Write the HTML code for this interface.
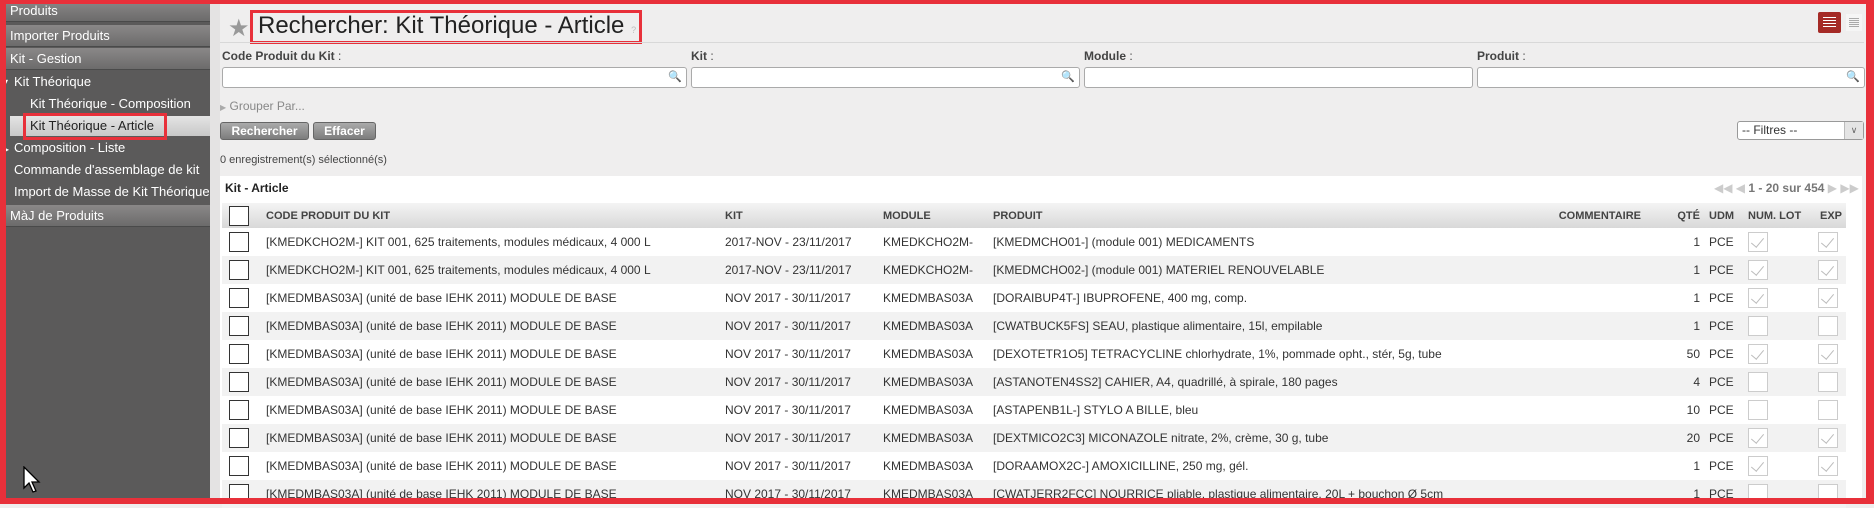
<!DOCTYPE html>
<html><head><meta charset="utf-8"><style>
*{box-sizing:border-box;margin:0;padding:0}
body{width:1874px;height:504px;overflow:hidden;background:#efeeee;font-family:"Liberation Sans",Arial,sans-serif;position:relative;color:#333}
.abs{position:absolute}
#side{left:0;top:0;width:210px;height:504px;background:#5b5a5a}
.bar{position:absolute;left:0;width:210px;height:22px;background:linear-gradient(#8a8888,#6c6b6b);border-bottom:1px solid #4a4a4a;color:#fff;font-size:13px;line-height:22px;padding-left:10px}
.it{position:absolute;color:#fff;font-size:13px;line-height:16px}
.lbl{position:absolute;top:49px;font-size:12px;font-weight:bold;color:#444}
.lbl span{font-weight:normal}
.inp{position:absolute;top:67px;height:21px;background:#fff;border:1px solid #aaa;border-radius:3px}
.btn{position:absolute;top:122px;height:18px;background:linear-gradient(#aaa,#7d7d7d);border:1px solid #666;border-radius:3px;color:#fff;font-weight:bold;font-size:12px;line-height:16px;text-align:center}
table{position:absolute;left:222px;top:203px;border-collapse:collapse;font-size:12px;table-layout:fixed;width:1624px}
td{height:28px;white-space:nowrap;padding:0;overflow:visible}
tr.h td{height:25px;background:linear-gradient(#f4f4f4,#d8d8d8);font-weight:bold;font-size:11px;color:#444}
tr:nth-child(odd):not(.h) td{background:#f2f2f2}
tr:nth-child(even) td{background:#fff}
.cb{display:inline-block;width:20px;height:20px;border:1px solid #333;background:#fff;vertical-align:middle}
.ck{display:inline-block;width:20px;height:20px;border:1px solid #ccc;background:#fff;vertical-align:middle;position:relative}
.ck.on::after{content:"";position:absolute;left:5px;top:2px;width:6px;height:11px;border-right:1.5px solid #bbb;border-bottom:1.5px solid #bbb;transform:rotate(40deg)}
.r{text-align:right}
</style></head><body>
<div id="side" class="abs">
<div class="bar" style="top:0">Produits</div>
<div class="bar" style="top:25px">Importer Produits</div>
<div class="bar" style="top:48px">Kit - Gestion</div>
<div class="it" style="left:4px;top:74px;font-size:8px">&#9662;</div>
<div class="it" style="left:14px;top:74px">Kit Théorique</div>
<div class="it" style="left:30px;top:96px">Kit Théorique - Composition</div>
<div class="abs" style="left:10px;top:116px;width:200px;height:20px;background:linear-gradient(#e4e4e4,#c8c8c8)"></div>
<div class="it" style="left:30px;top:118px;color:#222">Kit Théorique - Article</div>
<div class="abs" style="left:23px;top:113px;width:144px;height:27px;border:3px solid #e8303a"></div>
<div class="it" style="left:5px;top:142px;font-size:8px">&#9656;</div>
<div class="it" style="left:14px;top:140px">Composition - Liste</div>
<div class="it" style="left:14px;top:162px">Commande d'assemblage de kit</div>
<div class="it" style="left:14px;top:184px">Import de Masse de Kit Théorique</div>
<div class="bar" style="top:205px">MàJ de Produits</div>
</div>
<div class="abs" style="left:210px;top:0;width:10px;height:504px;background:#e4e3e3"></div>
<div class="abs" style="left:228px;top:14px;font-size:24px;color:#999">&#9733;</div>
<div class="abs" style="left:258px;top:12px;font-size:24px;color:#222">Rechercher: Kit Théorique - Article <span style="font-size:9px;color:#bbb">?</span></div>
<div class="abs" style="left:250px;top:10px;width:392px;height:34px;border:3px solid #e8303a"></div>
<div class="abs" style="left:220px;top:42px;width:1644px;height:1px;background:#d8d8d8"></div>
<div class="abs" style="left:1818px;top:12px;width:23px;height:21px;background:#a52a26;border-radius:2px"><div style="margin:5px 5px;height:11px;background:repeating-linear-gradient(#fff 0 1px,transparent 1px 3px)"></div></div>
<div class="abs" style="left:1846px;top:14px;width:16px;height:17px;background:#f5f5f5"><div style="margin:4px 3px;height:9px;background:repeating-linear-gradient(#aaa 0 1px,transparent 1px 2px)"></div></div>
<div class="lbl" style="left:222px">Code Produit du Kit <span>:</span></div>
<div class="lbl" style="left:691px">Kit <span>:</span></div>
<div class="lbl" style="left:1084px">Module <span>:</span></div>
<div class="lbl" style="left:1477px">Produit <span>:</span></div>
<div class="inp" style="left:222px;width:465px"><span style="position:absolute;right:4px;top:2px;font-size:11px;color:#777">&#128269;</span></div>
<div class="inp" style="left:691px;width:389px"><span style="position:absolute;right:4px;top:2px;font-size:11px;color:#777">&#128269;</span></div>
<div class="inp" style="left:1084px;width:389px"></div>
<div class="inp" style="left:1477px;width:388px"><span style="position:absolute;right:4px;top:2px;font-size:11px;color:#777">&#128269;</span></div>
<div class="abs" style="left:220px;top:99px;font-size:12px;color:#888"><span style="font-size:8px;color:#aaa">&#9654;</span> Grouper Par...</div>
<div class="btn" style="left:220px;width:89px">Rechercher</div>
<div class="btn" style="left:313px;width:63px">Effacer</div>
<div class="abs" style="left:1737px;top:121px;width:127px;height:19px;background:#fff;border:1px solid #999;border-radius:3px;font-size:12px;line-height:17px;padding-left:4px">-- Filtres --<span style="position:absolute;right:0;top:0;width:19px;height:17px;background:#e4e4e4;border-left:1px solid #bbb;text-align:center;font-size:9px;color:#666">&#8744;</span></div>
<div class="abs" style="left:220px;top:154px;font-size:11px;color:#444">0 enregistrement(s) sélectionné(s)</div>
<div class="abs" style="left:220px;top:176px;width:1642px;height:322px;background:#fff"></div>
<div class="abs" style="left:225px;top:181px;font-size:12px;font-weight:bold;color:#222">Kit - Article</div>
<div class="abs" style="left:1714px;top:181px;font-size:12px;color:#888"><span style="color:#ccc">&#9664;&#9664; &#9664;</span> <span style="font-weight:bold;color:#777">1 - 20 sur 454</span> <span style="color:#ccc">&#9654; &#9654;&#9654;</span></div>
<table>
<colgroup><col style="width:44px"><col style="width:459px"><col style="width:158px"><col style="width:110px"><col style="width:500px"><col style="width:148px"><col style="width:59px"><col style="width:48px"><col style="width:70px"><col style="width:28px"></colgroup>
<tr class="h"><td style="padding-left:7px"><span class="cb"></span></td><td>CODE PRODUIT DU KIT</td><td>KIT</td><td>MODULE</td><td>PRODUIT</td><td class="r">COMMENTAIRE</td><td class="r">QTÉ</td><td style="padding-left:9px">UDM</td><td style="padding-left:0">NUM. LOT</td><td style="padding-left:2px">EXP</td></tr>
<tr><td style="padding-left:7px"><span class="cb"></span></td><td>[KMEDKCHO2M-] KIT 001, 625 traitements, modules médicaux, 4 000 L</td><td>2017-NOV - 23/11/2017</td><td>KMEDKCHO2M-</td><td>[KMEDMCHO01-] (module 001) MEDICAMENTS</td><td></td><td class="r">1</td><td style="padding-left:9px">PCE</td><td><span class="ck on"></span></td><td><span class="ck on"></span></td></tr>
<tr><td style="padding-left:7px"><span class="cb"></span></td><td>[KMEDKCHO2M-] KIT 001, 625 traitements, modules médicaux, 4 000 L</td><td>2017-NOV - 23/11/2017</td><td>KMEDKCHO2M-</td><td>[KMEDMCHO02-] (module 001) MATERIEL RENOUVELABLE</td><td></td><td class="r">1</td><td style="padding-left:9px">PCE</td><td><span class="ck on"></span></td><td><span class="ck on"></span></td></tr>
<tr><td style="padding-left:7px"><span class="cb"></span></td><td>[KMEDMBAS03A] (unité de base IEHK 2011) MODULE DE BASE</td><td>NOV 2017 - 30/11/2017</td><td>KMEDMBAS03A</td><td>[DORAIBUP4T-] IBUPROFENE, 400 mg, comp.</td><td></td><td class="r">1</td><td style="padding-left:9px">PCE</td><td><span class="ck on"></span></td><td><span class="ck on"></span></td></tr>
<tr><td style="padding-left:7px"><span class="cb"></span></td><td>[KMEDMBAS03A] (unité de base IEHK 2011) MODULE DE BASE</td><td>NOV 2017 - 30/11/2017</td><td>KMEDMBAS03A</td><td>[CWATBUCK5FS] SEAU, plastique alimentaire, 15l, empilable</td><td></td><td class="r">1</td><td style="padding-left:9px">PCE</td><td><span class="ck"></span></td><td><span class="ck"></span></td></tr>
<tr><td style="padding-left:7px"><span class="cb"></span></td><td>[KMEDMBAS03A] (unité de base IEHK 2011) MODULE DE BASE</td><td>NOV 2017 - 30/11/2017</td><td>KMEDMBAS03A</td><td>[DEXOTETR1O5] TETRACYCLINE chlorhydrate, 1%, pommade opht., stér, 5g, tube</td><td></td><td class="r">50</td><td style="padding-left:9px">PCE</td><td><span class="ck on"></span></td><td><span class="ck on"></span></td></tr>
<tr><td style="padding-left:7px"><span class="cb"></span></td><td>[KMEDMBAS03A] (unité de base IEHK 2011) MODULE DE BASE</td><td>NOV 2017 - 30/11/2017</td><td>KMEDMBAS03A</td><td>[ASTANOTEN4SS2] CAHIER, A4, quadrillé, à spirale, 180 pages</td><td></td><td class="r">4</td><td style="padding-left:9px">PCE</td><td><span class="ck"></span></td><td><span class="ck"></span></td></tr>
<tr><td style="padding-left:7px"><span class="cb"></span></td><td>[KMEDMBAS03A] (unité de base IEHK 2011) MODULE DE BASE</td><td>NOV 2017 - 30/11/2017</td><td>KMEDMBAS03A</td><td>[ASTAPENB1L-] STYLO A BILLE, bleu</td><td></td><td class="r">10</td><td style="padding-left:9px">PCE</td><td><span class="ck"></span></td><td><span class="ck"></span></td></tr>
<tr><td style="padding-left:7px"><span class="cb"></span></td><td>[KMEDMBAS03A] (unité de base IEHK 2011) MODULE DE BASE</td><td>NOV 2017 - 30/11/2017</td><td>KMEDMBAS03A</td><td>[DEXTMICO2C3] MICONAZOLE nitrate, 2%, crème, 30 g, tube</td><td></td><td class="r">20</td><td style="padding-left:9px">PCE</td><td><span class="ck on"></span></td><td><span class="ck on"></span></td></tr>
<tr><td style="padding-left:7px"><span class="cb"></span></td><td>[KMEDMBAS03A] (unité de base IEHK 2011) MODULE DE BASE</td><td>NOV 2017 - 30/11/2017</td><td>KMEDMBAS03A</td><td>[DORAAMOX2C-] AMOXICILLINE, 250 mg, gél.</td><td></td><td class="r">1</td><td style="padding-left:9px">PCE</td><td><span class="ck on"></span></td><td><span class="ck on"></span></td></tr>
<tr><td style="padding-left:7px"><span class="cb"></span></td><td>[KMEDMBAS03A] (unité de base IEHK 2011) MODULE DE BASE</td><td>NOV 2017 - 30/11/2017</td><td>KMEDMBAS03A</td><td>[CWATJERR2FCC] NOURRICE pliable, plastique alimentaire, 20L + bouchon Ø 5cm</td><td></td><td class="r">1</td><td style="padding-left:9px">PCE</td><td><span class="ck"></span></td><td><span class="ck"></span></td></tr>
</table>
<svg class="abs" style="left:23px;top:466px" width="20" height="28" viewBox="0 0 20 28"><path d="M1 1 L1 22 L6 17 L10 26 L13 25 L9 16 L16 16 Z" fill="#fff" stroke="#000" stroke-width="1.3"/></svg>
<div class="abs" style="left:0;top:0;width:1874px;height:504px;border:solid #e8303a;border-width:4px 8px 6px 6px"></div>
</body></html>
